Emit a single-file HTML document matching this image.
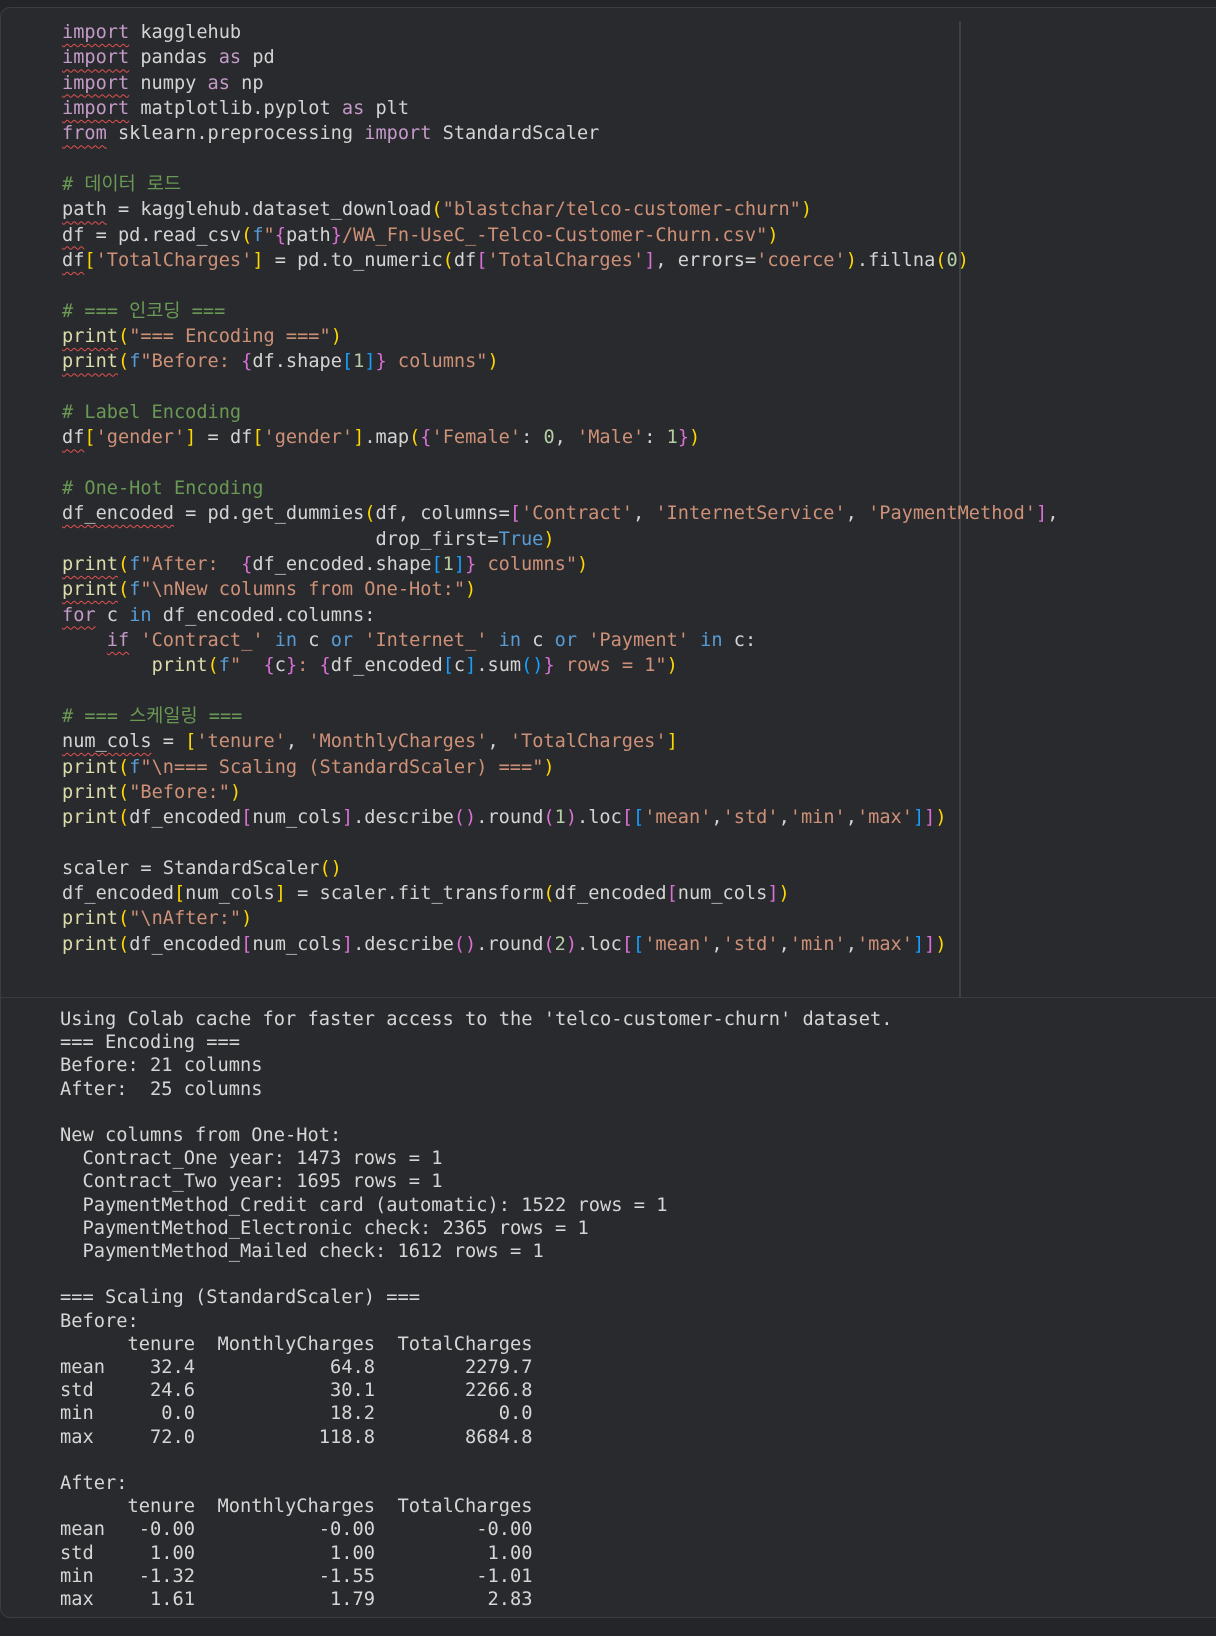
<!DOCTYPE html>
<html><head><meta charset="utf-8"><style>
html,body{margin:0;padding:0;background:#242528;width:1216px;height:1636px;overflow:hidden}
.card{position:absolute;left:0;top:7px;width:1240px;height:1611px;background:#292a2d;border:1px solid #3c3d40;border-radius:10px;box-sizing:border-box}
.vl{position:absolute;left:959px;top:21px;width:2px;height:976px;background:#3f4043}
.sep{position:absolute;left:0;top:997px;width:1216px;height:1px;background:#3a3b3e}
pre{margin:0;position:absolute;font-family:"DejaVu Sans Mono","Liberation Mono","Noto Sans CJK KR",monospace;white-space:pre}
.code{left:62px;top:20px;font-size:18.6px;line-height:25.33px;color:#d4d4d4}
.out{left:60px;top:1008px;font-size:18.7px;line-height:23.2px;color:#d6d6d6}
.k{color:#c49ac8}.s{color:#ce9178}.c{color:#6a9955}.f{color:#dcdcaa}.b{color:#569cd6}.n{color:#b5cea8}
.y{color:#ffd700}.p{color:#da70d6}.l{color:#179fff}
.e{text-decoration:underline wavy #e05050;text-decoration-thickness:1px;text-underline-offset:5px}
</style></head><body>
<div class="card"></div>
<div class="vl"></div>
<div class="sep"></div>
<pre class="code"><span class="k e">import</span> kagglehub
<span class="k e">import</span> pandas <span class="k">as</span> pd
<span class="k e">import</span> numpy <span class="k">as</span> np
<span class="k e">import</span> matplotlib.pyplot <span class="k">as</span> plt
<span class="k e">from</span> sklearn.preprocessing <span class="k">import</span> StandardScaler

<span class="c"># 데이터 로드</span>
<span class="e">path</span> = kagglehub.dataset_download<span class="y">(</span><span class="s">"blastchar/telco-customer-churn"</span><span class="y">)</span>
<span class="e">df</span> = pd.read_csv<span class="y">(</span><span class="b">f</span><span class="s">"</span><span class="p">{</span>path<span class="p">}</span><span class="s">/WA_Fn-UseC_-Telco-Customer-Churn.csv"</span><span class="y">)</span>
<span class="e">df</span><span class="y">[</span><span class="s">'TotalCharges'</span><span class="y">]</span> = pd.to_numeric<span class="y">(</span>df<span class="p">[</span><span class="s">'TotalCharges'</span><span class="p">]</span>, errors=<span class="s">'coerce'</span><span class="y">)</span>.fillna<span class="y">(</span><span class="n">0</span><span class="y">)</span>

<span class="c"># === 인코딩 ===</span>
<span class="f e">print</span><span class="y">(</span><span class="s">"=== Encoding ==="</span><span class="y">)</span>
<span class="f e">print</span><span class="y">(</span><span class="b">f</span><span class="s">"Before: </span><span class="p">{</span>df.shape<span class="l">[</span><span class="n">1</span><span class="l">]</span><span class="p">}</span><span class="s"> columns"</span><span class="y">)</span>

<span class="c"># Label Encoding</span>
<span class="e">df</span><span class="y">[</span><span class="s">'gender'</span><span class="y">]</span> = df<span class="y">[</span><span class="s">'gender'</span><span class="y">]</span>.map<span class="y">(</span><span class="p">{</span><span class="s">'Female'</span>: <span class="n">0</span>, <span class="s">'Male'</span>: <span class="n">1</span><span class="p">}</span><span class="y">)</span>

<span class="c"># One-Hot Encoding</span>
<span class="e">df_encoded</span> = pd.get_dummies<span class="y">(</span>df, columns=<span class="p">[</span><span class="s">'Contract'</span>, <span class="s">'InternetService'</span>, <span class="s">'PaymentMethod'</span><span class="p">]</span>,
                            drop_first=<span class="b">True</span><span class="y">)</span>
<span class="f e">print</span><span class="y">(</span><span class="b">f</span><span class="s">"After:  </span><span class="p">{</span>df_encoded.shape<span class="l">[</span><span class="n">1</span><span class="l">]</span><span class="p">}</span><span class="s"> columns"</span><span class="y">)</span>
<span class="f e">print</span><span class="y">(</span><span class="b">f</span><span class="s">"\nNew columns from One-Hot:"</span><span class="y">)</span>
<span class="k e">for</span> c <span class="b">in</span> df_encoded.columns:
    <span class="k e">if</span> <span class="s">'Contract_'</span> <span class="b">in</span> c <span class="b">or</span> <span class="s">'Internet_'</span> <span class="b">in</span> c <span class="b">or</span> <span class="s">'Payment'</span> <span class="b">in</span> c:
        <span class="f">print</span><span class="y">(</span><span class="b">f</span><span class="s">"  </span><span class="p">{</span>c<span class="p">}</span><span class="s">: </span><span class="p">{</span>df_encoded<span class="l">[</span>c<span class="l">]</span>.sum<span class="l">()</span><span class="p">}</span><span class="s"> rows = 1"</span><span class="y">)</span>

<span class="c"># === 스케일링 ===</span>
<span class="e">num_cols</span> = <span class="y">[</span><span class="s">'tenure'</span>, <span class="s">'MonthlyCharges'</span>, <span class="s">'TotalCharges'</span><span class="y">]</span>
<span class="f">print</span><span class="y">(</span><span class="b">f</span><span class="s">"\n=== Scaling (StandardScaler) ==="</span><span class="y">)</span>
<span class="f">print</span><span class="y">(</span><span class="s">"Before:"</span><span class="y">)</span>
<span class="f">print</span><span class="y">(</span>df_encoded<span class="p">[</span>num_cols<span class="p">]</span>.describe<span class="p">()</span>.round<span class="p">(</span><span class="n">1</span><span class="p">)</span>.loc<span class="p">[</span><span class="l">[</span><span class="s">'mean'</span>,<span class="s">'std'</span>,<span class="s">'min'</span>,<span class="s">'max'</span><span class="l">]</span><span class="p">]</span><span class="y">)</span>

scaler = StandardScaler<span class="y">()</span>
df_encoded<span class="y">[</span>num_cols<span class="y">]</span> = scaler.fit_transform<span class="y">(</span>df_encoded<span class="p">[</span>num_cols<span class="p">]</span><span class="y">)</span>
<span class="f">print</span><span class="y">(</span><span class="s">"\nAfter:"</span><span class="y">)</span>
<span class="f">print</span><span class="y">(</span>df_encoded<span class="p">[</span>num_cols<span class="p">]</span>.describe<span class="p">()</span>.round<span class="p">(</span><span class="n">2</span><span class="p">)</span>.loc<span class="p">[</span><span class="l">[</span><span class="s">'mean'</span>,<span class="s">'std'</span>,<span class="s">'min'</span>,<span class="s">'max'</span><span class="l">]</span><span class="p">]</span><span class="y">)</span></pre>
<pre class="out">Using Colab cache for faster access to the 'telco-customer-churn' dataset.
=== Encoding ===
Before: 21 columns
After:  25 columns

New columns from One-Hot:
  Contract_One year: 1473 rows = 1
  Contract_Two year: 1695 rows = 1
  PaymentMethod_Credit card (automatic): 1522 rows = 1
  PaymentMethod_Electronic check: 2365 rows = 1
  PaymentMethod_Mailed check: 1612 rows = 1

=== Scaling (StandardScaler) ===
Before:
      tenure  MonthlyCharges  TotalCharges
mean    32.4            64.8        2279.7
std     24.6            30.1        2266.8
min      0.0            18.2           0.0
max     72.0           118.8        8684.8

After:
      tenure  MonthlyCharges  TotalCharges
mean   -0.00           -0.00         -0.00
std     1.00            1.00          1.00
min    -1.32           -1.55         -1.01
max     1.61            1.79          2.83</pre>
</body></html>
